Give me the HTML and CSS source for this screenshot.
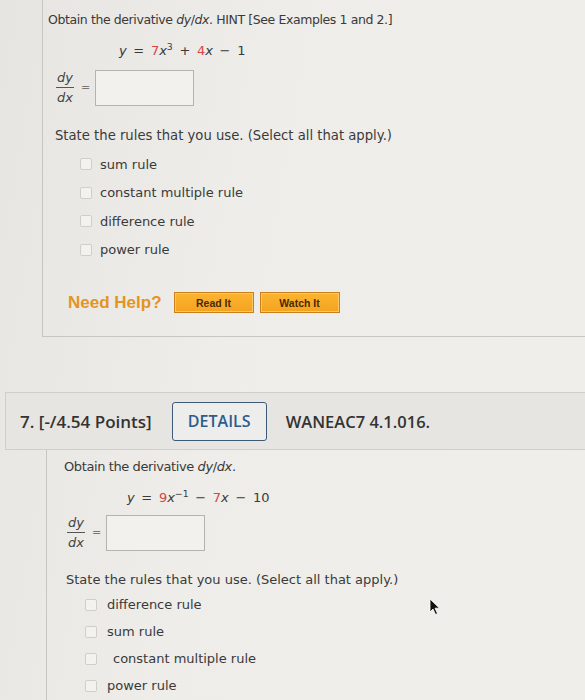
FILE: index.html
```html
<!DOCTYPE html>
<html>
<head>
<meta charset="utf-8">
<link rel="stylesheet" href="styles.css">
</head>
<body>
<div class="page">
  <section class="card1">
    <p class="q">Obtain the derivative <i>dy</i>/<i>dx</i>. HINT [See Examples 1 and 2.]</p>
    <p class="eq eq1"><i>y</i> = <span class="red">7</span><i>x</i><sup>3</sup> + <span class="red">4</span><i>x</i> &minus; 1</p>
    <div class="ans ans1">
      <div class="frac"><i class="num">dy</i><i class="den">dx</i></div>
      <span class="equals">=</span>
      <div class="box"></div>
    </div>
    <p class="rules rules1">State the rules that you use. (Select all that apply.)</p>
    <ul class="checks checks1">
      <li><span class="cb"></span>sum rule</li>
      <li><span class="cb"></span>constant multiple rule</li>
      <li><span class="cb"></span>difference rule</li>
      <li><span class="cb"></span>power rule</li>
    </ul>
    <div class="help">
      <span class="need">Need Help?</span>
      <span class="btn">Read It</span>
      <span class="btn">Watch It</span>
    </div>
  </section>

  <section class="card2">
    <header class="head">
      <span class="pts">7. [-/4.54 Points]</span>
      <span class="details">DETAILS</span>
      <span class="code">WANEAC7 4.1.016.</span>
    </header>
    <div class="body2">
      <p class="q2">Obtain the derivative <i>dy</i>/<i>dx</i>.</p>
      <p class="eq eq2"><i>y</i> = <span class="red">9</span><i>x</i><sup>&minus;1</sup> &minus; <span class="red">7</span><i>x</i> &minus; 10</p>
      <div class="ans ans2">
        <div class="frac"><i class="num">dy</i><i class="den">dx</i></div>
        <span class="equals">=</span>
        <div class="box"></div>
      </div>
      <p class="rules rules2">State the rules that you use. (Select all that apply.)</p>
      <ul class="checks checks2">
        <li><span class="cb"></span>difference rule</li>
        <li><span class="cb"></span>sum rule</li>
        <li><span class="cb"></span><span class="sp">constant multiple rule</span></li>
        <li><span class="cb"></span>power rule</li>
      </ul>
    </div>
  </section>

  <svg class="cursor" width="12" height="18" viewBox="0 0 12 18">
    <path d="M1 1 L1 14 L4 11 L6.5 16.5 L8.5 15.5 L6 10.2 L10.5 10.2 Z" fill="#111" stroke="#fff" stroke-width="0.8"/>
  </svg>
</div>
</body>
</html>
```

FILE: styles.css
```css
html, body {
  margin: 0;
  padding: 0;
}
body {
  background: #ebeae6;
  font-family: "DejaVu Sans", Verdana, sans-serif;
  color: #3a3a3a;
  font-size: 13px;
}
.page {
  position: relative;
  width: 585px;
  height: 700px;
  overflow: hidden;
  background: linear-gradient(100deg, #e6e5e1 0%, #eeede9 40%, #efeeea 100%);
}
p { margin: 0; }
i { font-style: italic; }
.red { color: #d4473f; }
sup { font-size: 0.72em; vertical-align: 0; position: relative; top: -0.5em; line-height: 0; }

.card1 {
  margin-left: 42px;
  height: 337px;
  box-sizing: border-box;
  border-left: 1px solid #c7c6c2;
  border-bottom: 1px solid #c7c6c2;
  padding: 12px 0 0 5px;
}
.q {
  line-height: 16px;
  font-size: 12.5px;
  letter-spacing: -0.4px;
}
.eq { line-height: 16px; word-spacing: 2.5px; }
.eq1 { margin: 15px 0 0 71px; }
.ans {
  display: flex;
  align-items: center;
}
.ans1 { margin: 10px 0 0 7px; }
.frac {
  display: flex;
  flex-direction: column;
  align-items: center;
  width: 20px;
  color: #444;
}
.frac .num, .frac .den {
  line-height: 17px;
  padding: 0 1px;
}
.frac .num { border-bottom: 1px solid #555; padding-bottom: 1px; }
.frac .den { padding-top: 1px; }
.equals {
  color: #777;
  font-size: 11px;
  margin: 0 5px 0 6px;
}
.box {
  width: 99px;
  height: 36px;
  box-sizing: border-box;
  border: 1px solid #b4b3af;
  background: #f2f1ed;
}
.rules { line-height: 16px; font-size: 13.2px; }
.rules1 { margin: 22px 0 0 7px; }
.checks {
  list-style: none;
  margin: 0;
  padding: 0;
}
.checks li {
  display: flex;
  align-items: center;
}
.cb {
  width: 10px;
  height: 10px;
  border: 1px solid #cfceca;
  border-radius: 2px;
  background: #f3f2ee;
  margin-right: 8px;
}
.checks1 { margin: 6px 0 0 32px; }
.checks1 li { height: 28.5px; }

.help {
  display: flex;
  align-items: center;
  margin: 28px 0 0 20px;
}
.need {
  font-family: "Liberation Sans", Arial, sans-serif;
  font-weight: bold;
  font-size: 17px;
  color: #e4941f;
  margin-right: 12px;
}
.btn {
  font-family: "Liberation Sans", Arial, sans-serif;
  font-weight: bold;
  font-size: 10.5px;
  color: #4a2a05;
  width: 80px;
  height: 21px;
  box-sizing: border-box;
  display: flex;
  align-items: center;
  justify-content: center;
  background: linear-gradient(#fbb531, #f4a21e);
  border: 1px solid #c9801a;
  box-shadow: inset 0 0 0 1px #fcc766;
  margin-right: 6px;
}

.card2 {
  margin-top: 55px;
}
.head {
  margin-left: 5px;
  height: 58px;
  box-sizing: border-box;
  border: 1px solid #cfcecb;
  border-right: none;
  background: #e6e5e1;
  display: flex;
  align-items: center;
  padding-left: 14px;
  font-family: "Open Sans", "DejaVu Sans", sans-serif;
  font-weight: 600;
  font-size: 17px;
  color: #333;
}
.details {
  margin-left: 20px;
  width: 95px;
  height: 39px;
  box-sizing: border-box;
  border: 1.5px solid #3d5a78;
  border-radius: 3px;
  display: flex;
  align-items: center;
  justify-content: center;
  color: #2d5b8e;
  background: #edeeec;
  font-size: 16px;
}
.code { margin-left: 19px; font-size: 16.5px; }

.body2 {
  margin-left: 46px;
  height: 250px;
  border-left: 1px solid #c7c6c2;
  padding: 9px 0 0 17px;
  box-sizing: border-box;
}
.q2 { line-height: 16px; letter-spacing: -0.4px; }
.eq2 { margin: 15px 0 0 63px; }
.ans2 { margin: 8px 0 0 2px; }
.rules2 { margin: 21px 0 0 2px; font-size: 13px; }
.checks2 { margin: 3px 0 0 21px; }
.checks2 li { height: 27px; }
.checks2 .cb { margin-right: 10px; }
.sp { margin-left: 6px; }

.cursor {
  position: absolute;
  left: 429px;
  top: 598px;
}
```
